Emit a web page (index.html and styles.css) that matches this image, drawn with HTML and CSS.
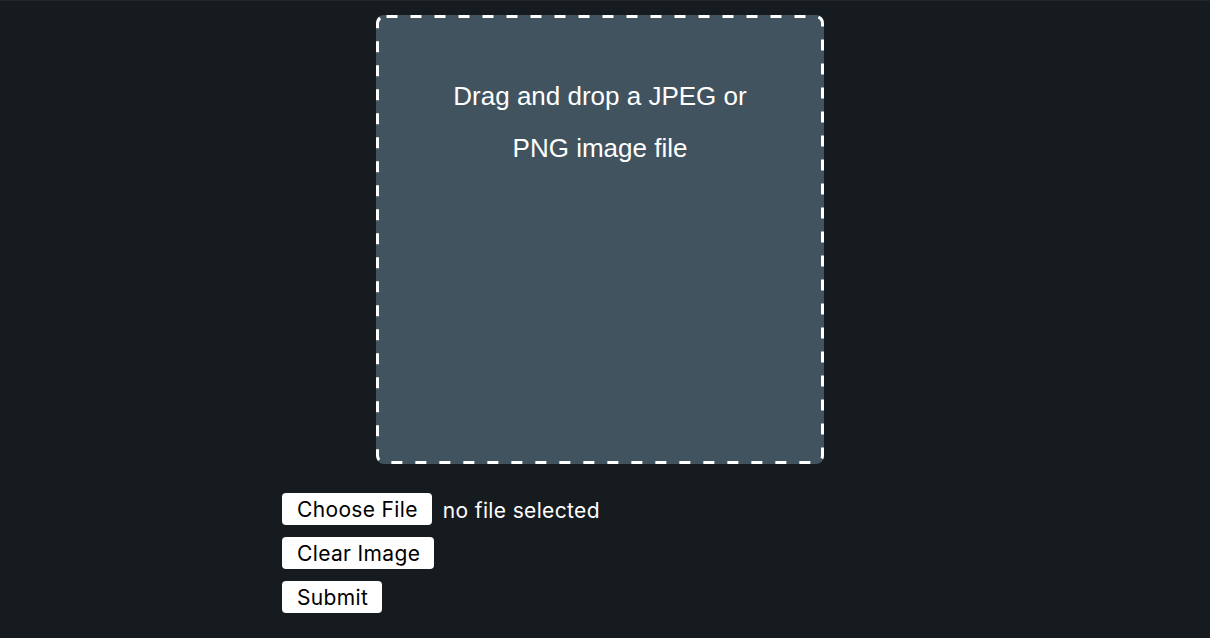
FILE: index.html
```html
<!DOCTYPE html>
<html>
<head>
<meta charset="utf-8">
<link rel="stylesheet" href="styles.css">
</head>
<body>
<div class="topline"></div>
<main class="page">
  <div class="dropzone">
    <svg class="dash-border" width="448" height="449" aria-hidden="true">
      <rect x="1.5" y="1.5" width="445" height="446" rx="7" ry="7" fill="none" stroke="#fff" stroke-width="3" stroke-dasharray="11 13" stroke-dashoffset="-2"></rect>
    </svg>
    <p class="drop-text">Drag and drop a JPEG or PNG image file</p>
  </div>
  <div class="controls">
    <div class="row">
      <button class="btn">Choose File</button>
      <span class="file-status">no file selected</span>
    </div>
    <div class="row"><button class="btn">Clear Image</button></div>
    <div class="row"><button class="btn">Submit</button></div>
  </div>
</main>
</body>
</html>
```
FILE: styles.css
```css
html, body {
  margin: 0;
  padding: 0;
  background: #161b1f;
  height: 100%;
}
body {
  font-family: Inter, "Noto Sans", sans-serif;
  color: #fff;
}
.topline {
  height: 1px;
  background: #20262a;
}
.page {
  width: 636px;
  padding: 14px 0 0 282px;
}
.dropzone {
  position: relative;
  box-sizing: border-box;
  width: 448px;
  height: 449px;
  margin: 0 auto;
  border-radius: 8px;
  background: #41535e;
  padding: 55px 62px 0;
}
.dash-border {
  position: absolute;
  left: 0;
  top: 0;
}
.drop-text {
  position: relative;
  margin: 0;
  font-family: "Liberation Sans", Arial, sans-serif;
  font-size: 26px;
  line-height: 52px;
  text-align: center;
  color: #fff;
}
.controls {
  margin-top: 29px;
  display: flex;
  flex-direction: column;
  gap: 12px;
}
.row {
  display: flex;
  align-items: center;
  gap: 11px;
}
.btn {
  box-sizing: border-box;
  font-family: Inter, "Noto Sans", sans-serif;
  font-size: 21px;
  letter-spacing: 0.35px;
  height: 32px;
  padding: 2px 14px 0 15px;
  border: none;
  border-radius: 4px;
  background: #fff;
  color: #000;
  line-height: 30px;
}
.file-status {
  font-size: 21px;
  letter-spacing: 0.35px;
  color: #fff;
  padding-top: 2px;
}
```
